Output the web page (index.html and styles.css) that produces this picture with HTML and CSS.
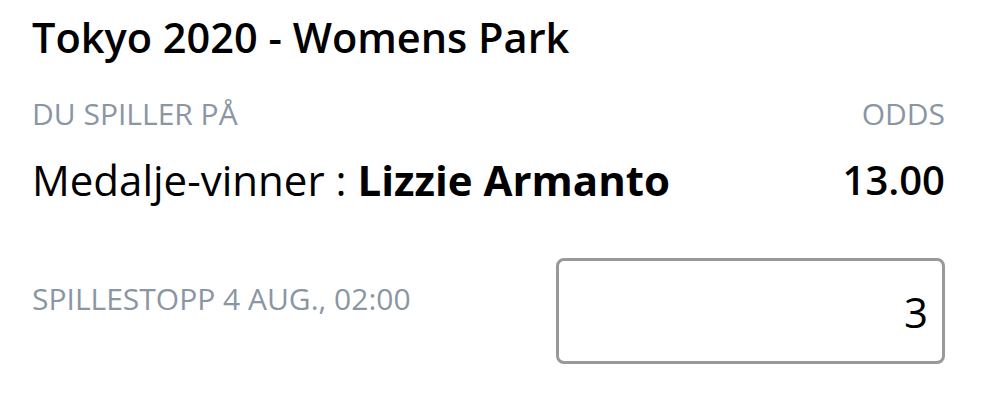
FILE: index.html
```html
<!DOCTYPE html>
<html lang="no">
<head>
    <meta charset="UTF-8">
    <meta name="viewport" content="width=device-width, initial-scale=1.0">
    <title>Kupong</title>
    <link rel="stylesheet" href="styles.css">
</head>
<body>
    <div class="coupon">
        <h1 class="event-title">Tokyo 2020 - Womens Park</h1>

        <div class="row labels">
            <span>DU SPILLER PÅ</span>
            <span>ODDS</span>
        </div>

        <div class="row selection">
            <span class="market">Medalje-vinner : <strong>Lizzie Armanto</strong></span>
            <span class="odds">13.00</span>
        </div>

        <div class="row stake-row">
            <span class="deadline">SPILLESTOPP 4 AUG., 02:00</span>
            <input class="stake" type="text" value="3">
        </div>
    </div>
</body>
</html>
```

FILE: styles.css
```css
body {
    margin: 0;
    background-color: #fff;
    font-family: 'Open Sans', sans-serif;
    color: #000;
}
.coupon {
    padding: 8px 53px 0 32px;
}
.event-title {
    margin: 0;
    font-size: 41.5px;
    font-weight: 600;
    line-height: 58px;
}
.row {
    display: flex;
    justify-content: space-between;
    align-items: center;
}
.labels {
    margin-top: 28px;
    font-size: 30px;
    line-height: 40px;
    color: #8a96a3;
}
.selection {
    margin-top: 17px;
    font-size: 42px;
    line-height: 58px;
}
.market strong {
    font-weight: 700;
}
.odds {
    font-size: 40px;
    font-weight: 600;
}
.stake-row {
    margin-top: 49px;
    align-items: flex-start;
}
.deadline {
    margin-top: 21px;
    font-size: 30px;
    line-height: 40px;
    color: #8a96a3;
}
.stake {
    box-sizing: border-box;
    width: 389px;
    height: 106px;
    padding: 0 14px;
    border: 3px solid #999;
    border-radius: 8px;
    font-family: 'Open Sans', sans-serif;
    font-size: 42px;
    color: #000;
    text-align: right;
    outline: none;
}
```
